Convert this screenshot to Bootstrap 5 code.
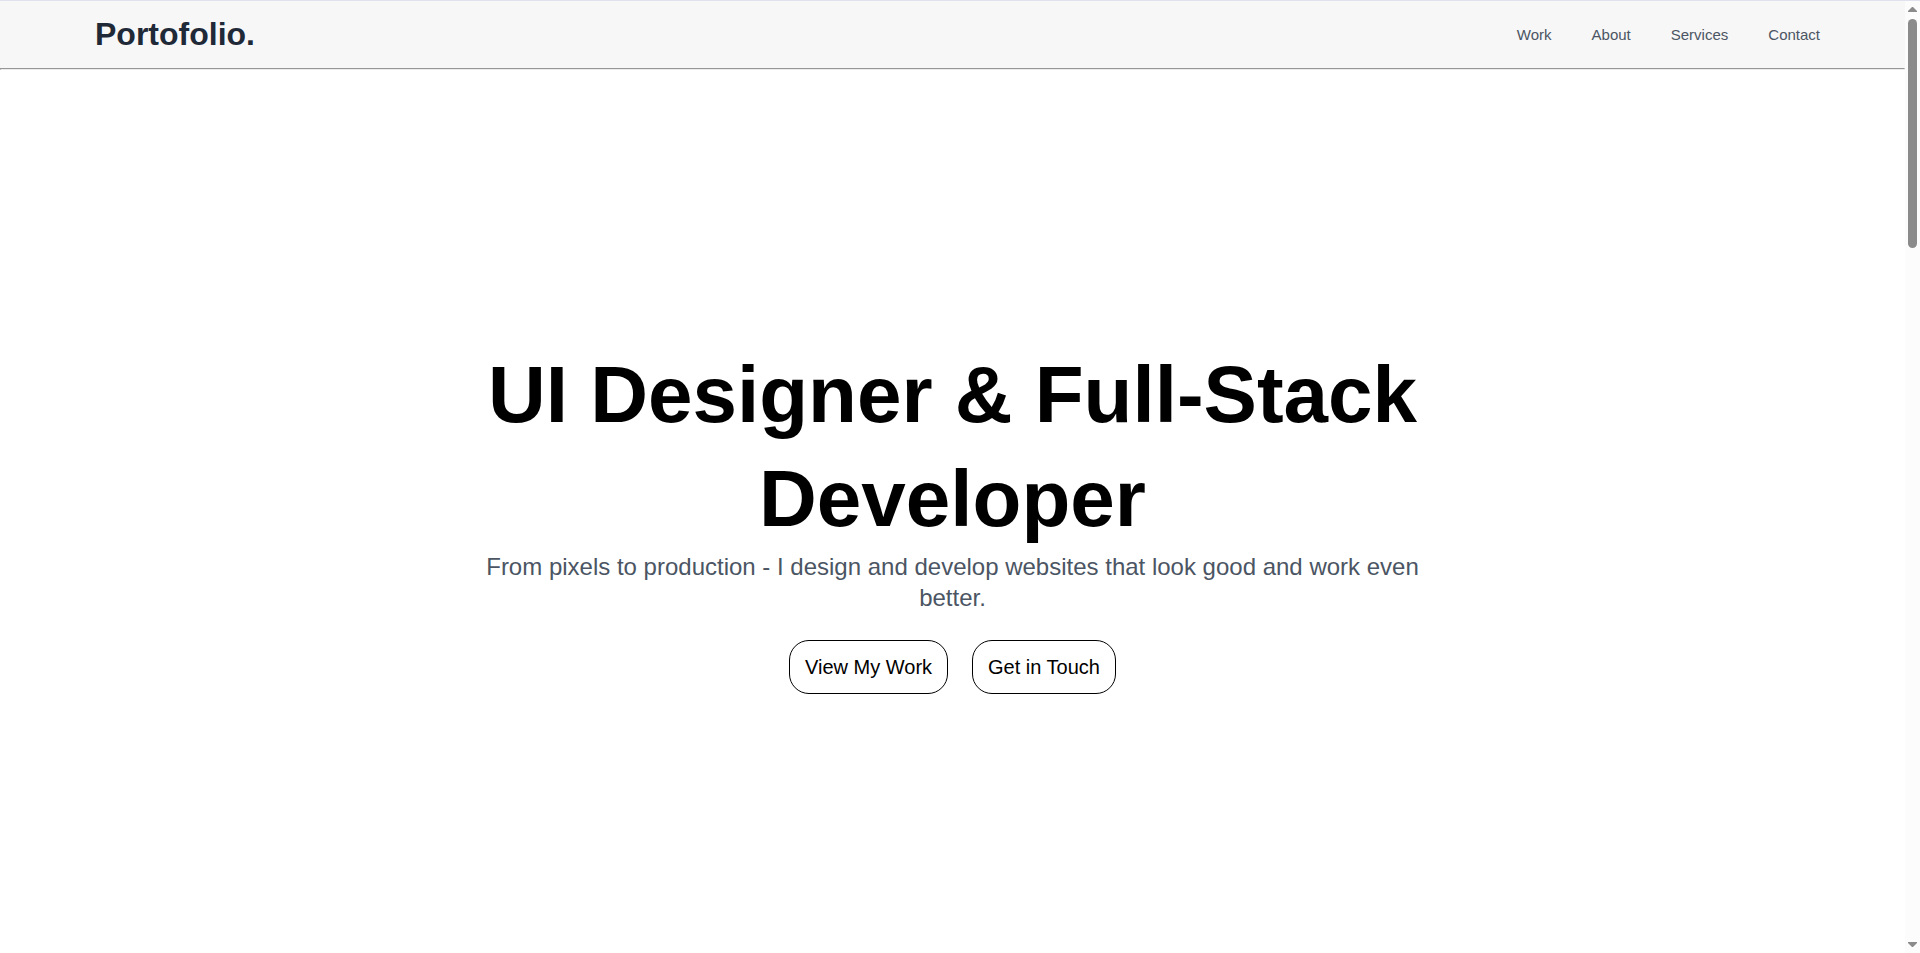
<!DOCTYPE html>
<html lang="en">
<head>
<meta charset="utf-8">
<meta name="viewport" content="width=device-width, initial-scale=1">
<title>Portofolio</title>
<link rel="stylesheet" href="https://cdn.jsdelivr.net/npm/bootstrap@5.3.0/dist/css/bootstrap.min.css">
<style>
  body { font-family: "Liberation Sans", Arial, sans-serif; color: #000; background: #fff; }
  .top-edge { height: 1px; background: #dfe1ec; }
  .site-header { background: #f7f7f7; padding: 0 85px 0 95px; min-height: 67px; }
  .navbar-brand { font-size: 32px; line-height: 42px; padding: 0 0 2px; color: #1f2937; }
  .site-nav { gap: 40px; }
  .site-nav .nav-link { font-size: 15px; line-height: 20px; color: #4b5563; }
  .header-rule { border: 1px solid; border-color: #969696 #ececec #ececec #969696; opacity: 1; }
  .hero { padding-top: 14px; }
  .hero-inner { max-width: 960px; }
  .hero-title { font-size: 80px; line-height: 104px; }
  .hero-text { font-size: 24px; line-height: 31px; color: #4b5563; margin-bottom: 27px; }
  .btn-pill { --bs-btn-color: #000; --bs-btn-border-color: #000; --bs-btn-hover-color: #fff;
    --bs-btn-hover-bg: #000; --bs-btn-hover-border-color: #000; --bs-btn-font-size: 20px;
    --bs-btn-line-height: 24px; --bs-btn-padding-y: 14px; --bs-btn-padding-x: 15px;
    --bs-btn-border-radius: 20px; }
  .scroll-rail { width: 15px; background: #fcfcfc; }
  .scroll-rail svg { width: 15px; height: 18px; fill: #8b8b8b; }
  .scroll-thumb { width: 9px; height: 25%; border-radius: 5px; background: #8b8b8b; }
</style>
</head>
<body class="vh-100 d-flex flex-column overflow-hidden">
  <div class="top-edge flex-shrink-0"></div>
  <div class="d-flex flex-grow-1">
    <div class="d-flex flex-column flex-grow-1">
      <header class="site-header navbar navbar-expand">
        <a class="navbar-brand fw-bold m-0" href="#">Portofolio.</a>
        <nav class="site-nav navbar-nav ms-auto" aria-label="Main">
          <a class="nav-link p-0" href="#work">Work</a>
          <a class="nav-link p-0" href="#about">About</a>
          <a class="nav-link p-0" href="#services">Services</a>
          <a class="nav-link p-0" href="#contact">Contact</a>
        </nav>
      </header>
      <hr class="header-rule m-0">
      <main class="hero flex-grow-1 d-flex flex-column align-items-center justify-content-center">
        <div class="hero-inner text-center">
          <h1 class="hero-title fw-bold mb-0">UI Designer &amp; Full-Stack Developer</h1>
          <p class="hero-text">From pixels to production - I design and develop websites that look good and work even better.</p>
          <div class="d-flex justify-content-center gap-4">
            <button type="button" class="btn btn-pill">View My Work</button>
            <button type="button" class="btn btn-pill">Get in Touch</button>
          </div>
        </div>
      </main>
    </div>
    <div class="scroll-rail d-flex flex-column align-items-center flex-shrink-0" aria-hidden="true">
      <svg class="flex-shrink-0" viewBox="0 0 15 18"><path d="M7 6h1l4 4v1H3v-1z"/></svg>
      <div class="flex-grow-1 w-100 d-flex justify-content-center">
        <div class="scroll-thumb"></div>
      </div>
      <svg class="flex-shrink-0" viewBox="0 0 15 18"><path d="M3 7h9v1l-4 4H7L3 8z"/></svg>
    </div>
  </div>
<script src="https://cdn.jsdelivr.net/npm/bootstrap@5.3.0/dist/js/bootstrap.bundle.min.js"></script>
</body>
</html>
